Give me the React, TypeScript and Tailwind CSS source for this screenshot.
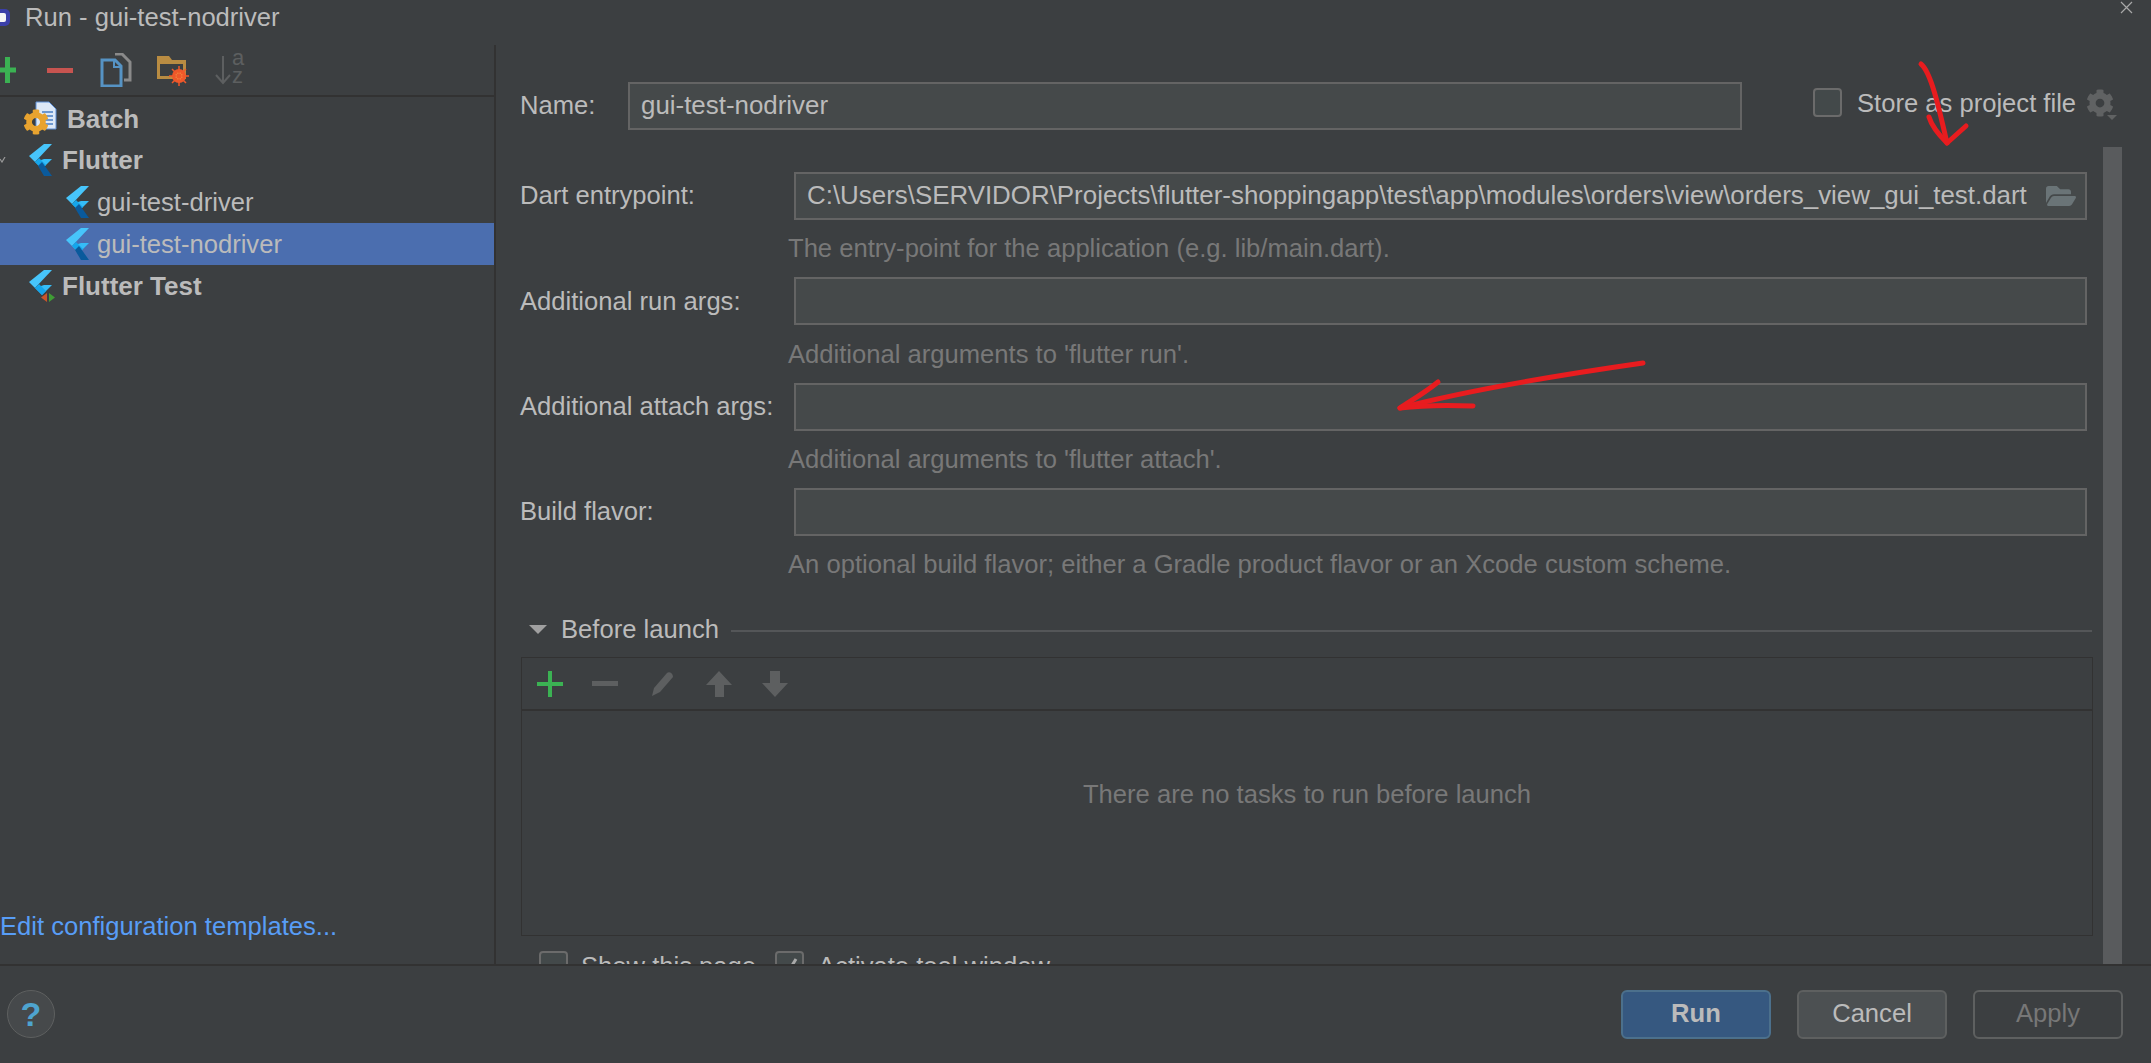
import { FaCog, FaFolderOpen } from "react-icons/fa";

const FlutterIcon = ({ badge = false }: { badge?: boolean }) => (
  <svg width="26" height="32" viewBox="0 0 26 32" className="shrink-0 overflow-visible">
    <polygon points="17,0 25,0 8,18 2,12" fill="#47c5fb" />
    <polygon points="17,15 25,15 15,25 8,18" fill="#35bdf8" />
    <polygon points="8,18 12,14 19,21 15,25" fill="#14a6ec" />
    {!badge && <polygon points="11,22 15,18 25,32 17,32" fill="#0a5a9c" />}
    {badge && (
      <>
        <polygon points="20,23 20,32 14,27.500" fill="#c9542a" />
        <polygon points="22,23 22,32 28,27.500" fill="#3f9c35" />
      </>
    )}
  </svg>
);

const BatchIcon = () => (
  <div className="relative w-[34px] h-[34px] shrink-0">
    <svg width="22" height="29" viewBox="0 0 22 29" className="absolute right-0 top-0">
      <path d="M1 1h13l7 7v20H1z" fill="#dce8f7" stroke="#5d8fd6" />
      <path d="M7 11h11M7 15h11M7 19h11M7 23h11" stroke="#4a7fc4" strokeWidth="1.5" />
    </svg>
    <FaCog size={26} className="absolute left-0 bottom-0 text-[#e8a32f]" />
  </div>
);

const Field = ({ text, width = "w-[1293px]" }: { text?: string; width?: string }) => (
  <div className={`${width} h-[48px] shrink-0 bg-[#45494a] border-2 border-[#646464] flex items-center pl-[11px] pb-[2px] text-[#bbbbbb] text-[25.9px] whitespace-nowrap relative`}>
    {text}
  </div>
);

const FormGroup = ({ label, hint, text, icon, labelClass = "" }: { label: string; hint: string; text?: string; icon?: boolean; labelClass?: string }) => (
  <div className="h-[105.33px]">
    <div className="flex items-center h-[48px]">
      <div className={`w-[274px] shrink-0 ${labelClass}`}>{label}</div>
      <div className="relative">
        <Field text={text} />
        {icon && <FaFolderOpen size={30} className="absolute right-[11px] top-[9px] text-[#6a7477]" />}
      </div>
    </div>
    <div className="pl-[268px] h-[57px] flex items-center text-[#787878]">{hint}</div>
  </div>
);

const Checkbox = ({ checked = false }: { checked?: boolean }) => (
  <div className="w-[29px] h-[29px] shrink-0 rounded-[4px] border-2 border-[#6b6b6b] bg-[#43494a] flex items-center justify-center">
    {checked && (
      <svg width="20" height="20" viewBox="0 0 20 20">
        <path d="M4 10l4 6 8-13" fill="none" stroke="#a9a9a9" strokeWidth="3" />
      </svg>
    )}
  </div>
);

const TreeRow = ({ children, selected = false, className = "" }: { children: React.ReactNode; selected?: boolean; className?: string }) => (
  <div className={`h-[42px] flex items-center ${selected ? "bg-[#4b6eaf]" : ""} ${className}`}>{children}</div>
);

export default function App() {
  return (
    <div className="w-[2151px] h-[1063px] overflow-hidden relative flex flex-col bg-[#3c3f41] text-[#bbbbbb] text-[25.6px] font-['Liberation_Sans',Arial,sans-serif]">
      {/* title bar */}
      <div className="h-[45px] shrink-0 flex items-center pb-[11px] relative">
        <div className="w-[10px] h-[17px] mr-[15px] rounded-r-[5px] bg-[#3b3fa8] flex items-center">
          <div className="w-[6px] h-[9px] bg-[#f5f5f5] rounded-r-[2px]" />
        </div>
        <span className="text-[#bbbbbb]">Run - gui-test-nodriver</span>
        <svg width="13" height="13" viewBox="0 0 13 13" className="absolute right-[18px] top-[1px]">
          <path d="M1 1l11 11M12 1L1 12" stroke="#a8a8a8" strokeWidth="1.2" />
        </svg>
      </div>

      <div className="flex-1 flex min-h-0">
        {/* left column */}
        <div className="w-[496px] shrink-0 border-r-2 border-[#323232] flex flex-col">
          <div className="h-[52px] shrink-0 border-b-2 border-[#323232] relative flex items-center">
            <svg width="16" height="26" viewBox="0 0 16 26" className="shrink-0">
              <path d="M5 0h5v26H5zM0 10.500h16v5H0z" fill="#3bb253" />
            </svg>
            <div className="ml-[31px] w-[26px] h-[5px] bg-[#c75450]" />
            <svg width="32" height="34" viewBox="0 0 32 34" className="ml-[27px]">
              <path d="M15 1h7l8 8v18h-6" fill="none" stroke="#8a8a8a" strokeWidth="3" />
              <path d="M2 7h13l6 6v20H2z" fill="none" stroke="#5693c4" strokeWidth="3" />
              <path d="M14 8v6h6" fill="none" stroke="#5693c4" strokeWidth="2" />
            </svg>
            <svg width="32" height="32" viewBox="0 0 32 32" className="ml-[25px]">
              <path d="M0 2h12l3 4h14v19H0z" fill="#b98c42" />
              <rect x="3" y="10" width="23" height="12" fill="#3c3f41" />
              <circle cx="22" cy="22" r="7" fill="#f0582a" />
              <circle cx="22" cy="22" r="3.500" fill="#f5a54a" />
              <path d="M22 12v20M12 22h20M15 15l14 14M29 15L15 29" stroke="#f0582a" strokeWidth="1.500" />
            </svg>
            <svg width="30" height="32" viewBox="0 0 30 32" className="ml-[26px] overflow-visible">
              <path d="M8 2v27M1 21l7 8 7-8" fill="none" stroke="#5d5f60" strokeWidth="2" />
              <text x="17" y="11" fontSize="22" fill="#5d5f60">a</text>
              <text x="17" y="29" fontSize="22" fill="#5d5f60">z</text>
            </svg>
          </div>
          <div className="flex-1">
            <TreeRow className="pl-[23px] font-bold text-[26px]">
              <BatchIcon />
              <span className="ml-[10px] pt-[2px]">Batch</span>
            </TreeRow>
            <TreeRow className="pl-[27px] font-bold text-[26px] relative">
              <svg width="6" height="6" viewBox="0 0 6 6" className="absolute left-0 top-[18px]">
                <path d="M0 2l2 3 3-5" fill="none" stroke="#9a9a9a" strokeWidth="1.2" />
              </svg>
              <FlutterIcon />
              <span className="ml-[9px]">Flutter</span>
            </TreeRow>
            <TreeRow className="pl-[64px]">
              <FlutterIcon />
              <span className="ml-[7px]">gui-test-driver</span>
            </TreeRow>
            <TreeRow selected className="pl-[64px]">
              <FlutterIcon />
              <span className="ml-[7px]">gui-test-nodriver</span>
            </TreeRow>
            <TreeRow className="pl-[27px] font-bold text-[26px]">
              <FlutterIcon badge />
              <span className="ml-[9px]">Flutter Test</span>
            </TreeRow>
          </div>
          <div className="h-[57px] shrink-0 text-[#589df6]">Edit configuration templates...</div>
        </div>

        {/* right column */}
        <div className="flex-1 flex min-w-0 overflow-hidden">
          <div className="w-[1607px] shrink-0 pl-[24px] pt-[37px]">
            <div className="flex items-center h-[48px]">
              <div className="w-[108px] shrink-0 pb-[2px]">Name:</div>
              <Field text="gui-test-nodriver" width="w-[1114px]" />
              <div className="ml-[71px] mb-[6px] flex items-center shrink-0">
                <Checkbox />
                <span className="ml-[15px] whitespace-nowrap">Store as project file</span>
                <div className="ml-[10px] relative shrink-0">
                  <FaCog size={28} className="text-[#606263]" />
                  <div className="absolute -right-[3px] bottom-[-3px] w-0 h-0 border-x-[5px] border-x-transparent border-t-[5px] border-t-[#606263]" />
                </div>
              </div>
            </div>
            <div className="h-[42px]" />
            <FormGroup
              label="Dart entrypoint:"
              labelClass="pb-[2px]"
              hint="The entry-point for the application (e.g. lib/main.dart)."
              text="C:\Users\SERVIDOR\Projects\flutter-shoppingapp\test\app\modules\orders\view\orders_view_gui_test.dart"
              icon
            />
            <FormGroup label="Additional run args:" hint="Additional arguments to 'flutter run'." />
            <FormGroup label="Additional attach args:" hint="Additional arguments to 'flutter attach'." />
            <FormGroup label="Build flavor:" labelClass="pb-[2px]" hint="An optional build flavor; either a Gradle product flavor or an Xcode custom scheme." />

            <div className="mt-[21px] h-[30px] flex items-center">
              <div className="ml-[9px] w-0 h-0 border-x-[9px] border-x-transparent border-t-[9px] border-t-[#a0a0a0]" />
              <span className="ml-[14px] whitespace-nowrap">Before launch</span>
              <div className="ml-[12px] w-[1361px] h-[2px] mt-[4px] bg-[#545658]" />
            </div>

            <div className="mt-[13px] ml-px w-[1572px] h-[279px] border border-[#323232] flex flex-col">
              <div className="h-[53px] shrink-0 border-b-2 border-[#323232] flex items-center pl-[15px]">
                <svg width="26" height="26" viewBox="0 0 26 26">
                  <path d="M11 0h4v26h-4zM0 11h26v4H0z" fill="#3bb253" />
                </svg>
                <div className="ml-[29px] w-[26px] h-[5px] bg-[#5d5f60]" />
                <svg width="24" height="26" viewBox="0 0 24 26" className="ml-[33px]">
                  <path d="M3 17L16 2c2-2 6 0 6 4L9 21l-8 4z" fill="#5d5f60" />
                </svg>
                <svg width="26" height="26" viewBox="0 0 26 26" className="ml-[31px]">
                  <path d="M13 0l13 14h-8v12H9V14H0z" fill="#5d5f60" />
                </svg>
                <svg width="26" height="26" viewBox="0 0 26 26" className="ml-[30px]">
                  <path d="M13 26L0 12h8V0h10v12h8z" fill="#5d5f60" />
                </svg>
              </div>
              <div className="flex-1 flex items-center justify-center pb-[58px] text-[#787878]">
                There are no tasks to run before launch
              </div>
            </div>

            <div className="mt-[15px] flex items-center ml-[19px] h-[29px] whitespace-nowrap">
              <Checkbox />
              <span className="ml-[13px]">Show this page</span>
              <div className="ml-[19px]"><Checkbox checked /></div>
              <span className="ml-[14px]">Activate tool window</span>
            </div>
          </div>
          <div className="w-[19px] shrink-0 mt-[102px] bg-[#595b5d]" />
        </div>
      </div>

      {/* footer */}
      <div className="h-[99px] shrink-0 border-t-2 border-[#323232] flex items-start justify-between pt-[24px] pl-[7px] pr-[28px]">
        <div className="w-[48px] h-[48px] rounded-full bg-[#46494b] border border-[#5e6060] flex items-center justify-center font-bold text-[34px] text-[#4ea4cf]">?</div>
        <div className="flex gap-[26px]">
          <button className="w-[150px] h-[49px] rounded-[6px] bg-[#365880] border-2 border-[#4c708c] pb-[2px] font-bold text-[#bbbbbb]">Run</button>
          <button className="w-[150px] h-[49px] rounded-[6px] bg-[#4c5052] border-2 border-[#5e6060] pb-[2px] text-[#bbbbbb]">Cancel</button>
          <button className="w-[150px] h-[49px] rounded-[6px] bg-[#3c3f41] border-2 border-[#5e6060] pb-[2px] text-[#777777]">Apply</button>
        </div>
      </div>

      {/* red annotation arrows */}
      <svg width="2151" height="1063" viewBox="0 0 2151 1063" className="absolute left-0 top-0 pointer-events-none">
        <g fill="none" stroke="#e81c1f" strokeLinecap="round" strokeLinejoin="round">
          <path d="M1921 64c10 8 18 44 26 79" strokeWidth="5" />
          <path d="M1929 117c3 10 10 18 18 26l19-17" strokeWidth="5" />
          <path d="M1643 363c-70 10-170 26-243 45" strokeWidth="5" />
          <path d="M1438 382c-12 10-26 18-38 26 24-3 48-3 73-2" strokeWidth="5" />
        </g>
      </svg>
    </div>
  );
}
